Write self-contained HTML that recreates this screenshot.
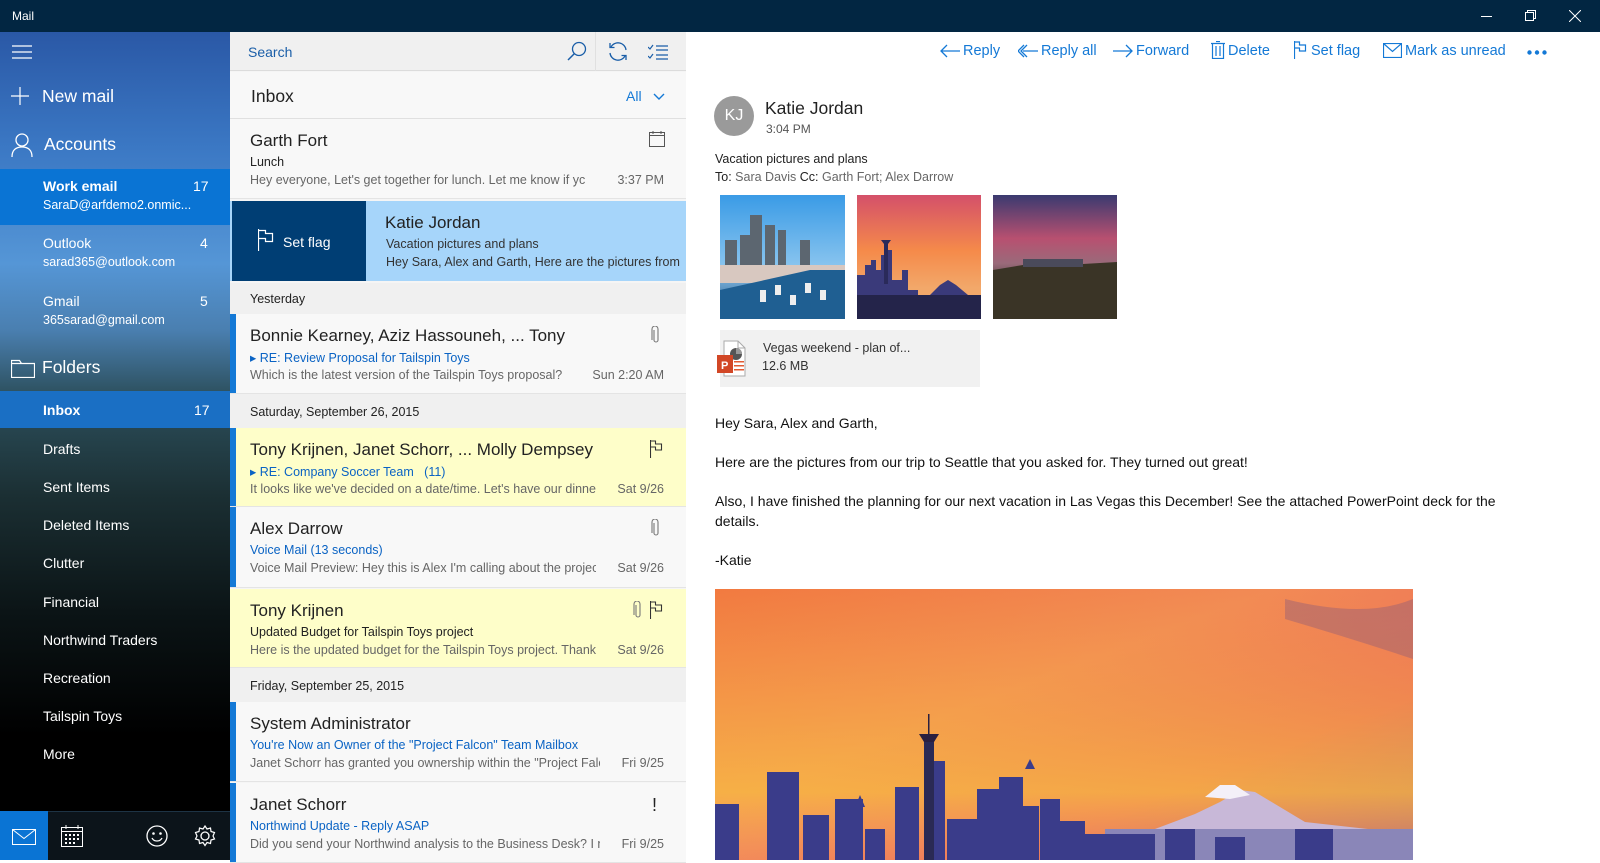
<!DOCTYPE html>
<html><head><meta charset="utf-8">
<style>
*{box-sizing:border-box;margin:0;padding:0}
body{width:1600px;height:860px;overflow:hidden;font-family:"Liberation Sans",sans-serif;background:#fff;position:relative}
.abs{position:absolute}
#title{left:0;top:0;width:1600px;height:32px;background:#022642;color:#fff;font-size:12px}
#side{left:0;top:32px;width:230px;height:828px;background:linear-gradient(180deg,#2a58a6 0%,#3b78c4 14%,#5596d6 28%,#4a7fb0 36%,#2c4f5c 44%,#1b2f33 56%,#0b1416 70%,#000 85%);color:#fff;overflow:hidden}
#side .t{position:absolute;white-space:nowrap}
#list{left:230px;top:32px;width:456px;height:828px;background:#f5f5f5}
.row{position:absolute;left:0;width:456px;background:#f8f8f8;border-bottom:1px solid #e4e4e4}
.row .bar{position:absolute;left:0;top:0;bottom:0;width:6px;background:#1479d6}
.nm{position:absolute;left:20px;top:12px;font-size:17px;color:#222;white-space:nowrap;width:400px;overflow:hidden}
.sb{position:absolute;left:20px;top:36px;font-size:12.5px;color:#222;white-space:nowrap}
.sb.b{color:#0a63c4}
.pv{position:absolute;left:20px;top:54px;font-size:12.5px;color:#666;white-space:nowrap;width:346px;overflow:hidden}
.dt{position:absolute;right:22px;top:54px;font-size:12.5px;color:#666}
.hdr{position:absolute;left:0;width:456px;background:#f0f0f0;font-size:12.5px;color:#222;padding-left:20px}
#read{left:686px;top:32px;width:914px;height:828px;background:#fff}
.tb{position:absolute;top:11px;font-size:14.5px;color:#1479d6;white-space:nowrap}
.tb svg{vertical-align:-3px;margin-right:3px}
</style></head><body>
<div id="title" class="abs"><span style="position:absolute;left:12px;top:9px">Mail</span>
<div style="position:absolute;left:1481px;top:16px;width:11px;height:1px;background:#fff"></div>
<svg style="position:absolute;left:1525px;top:10px" width="12" height="12"><rect x="0.5" y="2.5" width="8" height="8" fill="none" stroke="#fff"/><path d="M2.5 2.5V0.5h8v8h-2" fill="none" stroke="#fff"/></svg>
<svg style="position:absolute;left:1569px;top:10px" width="12" height="12"><path d="M0 0L12 12M12 0L0 12" stroke="#fff"/></svg>
</div>

<div id="side" class="abs">
<svg class="t" style="left:12px;top:13px" width="20" height="14"><path d="M0 1h20M0 7h20M0 13h20" stroke="#fff" stroke-width="1.2"/></svg>
<svg class="t" style="left:11px;top:55px" width="18" height="18"><path d="M9 0v18M0 9h18" stroke="#fff" stroke-width="1.2"/></svg>
<div class="t" style="left:42px;top:54px;font-size:17.5px">New mail</div>
<svg class="t" style="left:11px;top:101px" width="22" height="24"><circle cx="11" cy="7" r="6" fill="none" stroke="#fff" stroke-width="1.3"/><path d="M1 24c0-7 4-10 10-10s10 3 10 10" fill="none" stroke="#fff" stroke-width="1.3"/></svg>
<div class="t" style="left:44px;top:102px;font-size:17.5px">Accounts</div>
<div class="t" style="left:0;top:137px;width:230px;height:56px;background:#0a74d4"></div>
<div class="t" style="left:43px;top:146px;font-size:14px;font-weight:bold">Work email</div>
<div class="t" style="left:193px;top:146px;font-size:14px">17</div>
<div class="t" style="left:43px;top:166px;font-size:12.5px">SaraD@arfdemo2.onmic...</div>
<div class="t" style="left:43px;top:203px;font-size:14px">Outlook</div>
<div class="t" style="left:200px;top:203px;font-size:14px">4</div>
<div class="t" style="left:43px;top:223px;font-size:12.5px">sarad365@outlook.com</div>
<div class="t" style="left:43px;top:261px;font-size:14px">Gmail</div>
<div class="t" style="left:200px;top:261px;font-size:14px">5</div>
<div class="t" style="left:43px;top:281px;font-size:12.5px">365sarad@gmail.com</div>
<svg class="t" style="left:11px;top:326px" width="24" height="20"><path d="M0.5 2.5h8l2 3h13v14h-23z M0.5 5.5h10" fill="none" stroke="#fff" stroke-width="1.2"/></svg>
<div class="t" style="left:42px;top:325px;font-size:17.5px">Folders</div>
<div class="t" style="left:0;top:359px;width:230px;height:37px;background:#1a6fc4"></div>
<div class="t" style="left:43px;top:370px;font-size:14px;font-weight:bold">Inbox</div>
<div class="t" style="left:194px;top:370px;font-size:14px">17</div>
<div class="t" style="left:43px;top:409px;font-size:14px">Drafts</div>
<div class="t" style="left:43px;top:447px;font-size:14px">Sent Items</div>
<div class="t" style="left:43px;top:485px;font-size:14px">Deleted Items</div>
<div class="t" style="left:43px;top:523px;font-size:14px">Clutter</div>
<div class="t" style="left:43px;top:562px;font-size:14px">Financial</div>
<div class="t" style="left:43px;top:600px;font-size:14px">Northwind Traders</div>
<div class="t" style="left:43px;top:638px;font-size:14px">Recreation</div>
<div class="t" style="left:43px;top:676px;font-size:14px">Tailspin Toys</div>
<div class="t" style="left:43px;top:714px;font-size:14px">More</div>
<div class="t" style="left:0;top:779px;width:230px;height:49px;background:#0c141a;border-top:1px solid #1d3344"></div>
<div class="t" style="left:0;top:779px;width:48px;height:49px;background:#0a74d4"></div>
<svg class="t" style="left:12px;top:797px" width="24" height="16"><rect x="0.5" y="0.5" width="23" height="15" fill="none" stroke="#fff"/><path d="M0.5 0.5l11.5 9 11.5-9" fill="none" stroke="#fff"/></svg>
<svg class="t" style="left:61px;top:793px" width="22" height="22"><rect x="0.5" y="2.5" width="21" height="19" fill="none" stroke="#fff"/><path d="M5 0v4M17 0v4M0.5 6.5h21" stroke="#fff"/><g fill="#fff"><rect x="4" y="9" width="2" height="2"/><rect x="8" y="9" width="2" height="2"/><rect x="12" y="9" width="2" height="2"/><rect x="16" y="9" width="2" height="2"/><rect x="4" y="13" width="2" height="2"/><rect x="8" y="13" width="2" height="2"/><rect x="12" y="13" width="2" height="2"/><rect x="16" y="13" width="2" height="2"/><rect x="4" y="17" width="2" height="2"/><rect x="8" y="17" width="2" height="2"/><rect x="12" y="17" width="2" height="2"/></g></svg>
<svg class="t" style="left:146px;top:793px" width="22" height="22"><circle cx="11" cy="11" r="10" fill="none" stroke="#fff" stroke-width="1.3"/><circle cx="7.5" cy="8.5" r="1.3" fill="#fff"/><circle cx="14.5" cy="8.5" r="1.3" fill="#fff"/><path d="M6 13c2 4 8 4 10 0" fill="none" stroke="#fff" stroke-width="1.3"/></svg>
<svg class="t" style="left:194px;top:793px" width="22" height="22"><circle cx="11" cy="11" r="4" fill="none" stroke="#fff" stroke-width="1.3"/><path d="M11 1l2 3 3.5-1 .5 3.5 3.5 1-1.5 3.5 1.5 3-3.5 1-.5 3.5-3.5-1-2 3-2-3-3.5 1-.5-3.5-3.5-1 1.5-3-1.5-3.5 3.5-1 .5-3.5 3.5 1z" fill="none" stroke="#fff" stroke-width="1.2"/></svg>
</div>

<div id="list" class="abs">
<div style="position:absolute;left:0;top:0;width:456px;height:39px;background:#f0f0f0;border-bottom:1px solid #dcdcdc"></div>
<div style="position:absolute;left:18px;top:12px;font-size:14px;color:#1a5ea8">Search</div>
<svg style="position:absolute;left:337px;top:9px" width="20" height="20"><circle cx="12" cy="8" r="6.5" fill="none" stroke="#1a5ea8" stroke-width="1.3"/><path d="M7.5 12.5L1 19" stroke="#1a5ea8" stroke-width="1.5"/></svg>
<div style="position:absolute;left:365px;top:0;width:1px;height:39px;background:#e0e0e0"></div>
<svg style="position:absolute;left:377px;top:9px" width="22" height="21"><path d="M19 9a8 8 0 0 0-15-3M3 12a8 8 0 0 0 15 3" fill="none" stroke="#1a5ea8" stroke-width="1.3"/><path d="M3 2v4.5h4.5M19 19v-4.5h-4.5" fill="none" stroke="#1a5ea8" stroke-width="1.3"/></svg>
<svg style="position:absolute;left:418px;top:12px" width="20" height="16"><path d="M0 3l2 2 3-4M0 12l2 2 3-4M8 2h12M8 6h12M8 11h12M8 15h12" fill="none" stroke="#1a5ea8" stroke-width="1.2"/></svg>
<div style="position:absolute;left:0;top:40px;width:456px;height:47px;background:#f8f8f8;border-bottom:1px solid #e0e0e0"></div>
<div style="position:absolute;left:21px;top:54px;font-size:17.5px;color:#222">Inbox</div>
<div style="position:absolute;left:396px;top:56px;font-size:14px;color:#1479d6">All</div>
<svg style="position:absolute;left:423px;top:61px" width="12" height="8"><path d="M1 1l5 5 5-5" fill="none" stroke="#1479d6" stroke-width="1.4"/></svg>

<div class="row" style="top:87px;height:80px">
<div class="nm" style="top:12px">Garth Fort</div>
<svg style="position:absolute;left:419px;top:12px" width="16" height="16"><rect x="0.5" y="1.5" width="15" height="14" fill="none" stroke="#555"/><path d="M0.5 4.5h15M4 0v3M12 0v3" stroke="#555"/></svg>
<div class="sb">Lunch</div>
<div class="pv">Hey everyone, Let's get together for lunch. Let me know if yc</div>
<div class="dt">3:37 PM</div></div>

<div class="row" style="top:169px;height:80px;background:#a6d5fa;border:none">
<div style="position:absolute;left:2px;top:0;width:134px;height:80px;background:#003e74"></div>
<svg style="position:absolute;left:28px;top:28px" width="16" height="22"><path d="M0.5 0v22M0.5 1.5h7v3h7v8h-7v-3h-7" fill="none" stroke="#fff" stroke-width="1.2"/></svg>
<div style="position:absolute;left:53px;top:33px;font-size:14px;color:#fff">Set flag</div>
<div style="position:absolute;left:155px;top:12px;font-size:17px;color:#222">Katie Jordan</div>
<div style="position:absolute;left:156px;top:36px;font-size:12.5px;color:#333">Vacation pictures and plans</div>
<div style="position:absolute;left:156px;top:54px;font-size:12.5px;color:#333;white-space:nowrap;width:300px;overflow:hidden">Hey Sara, Alex and Garth, Here are the pictures from</div></div>

<div class="hdr" style="top:251px;height:31px;line-height:33px">Yesterday</div>
<div class="row" style="top:282px;height:80px"><div class="bar"></div>
<div class="nm" style="width:320px">Bonnie Kearney, Aziz Hassouneh, ... Tony Krijnen</div>
<svg style="position:absolute;left:421px;top:12px" width="10" height="18"><path d="M3 4v10a2 2 0 0 0 4 0V3a3 3 0 0 0-6 0v11" fill="none" stroke="#777" stroke-width="1.1"/></svg>
<div class="sb b">&#9656; RE: Review Proposal for Tailspin Toys</div>
<div class="pv">Which is the latest version of the Tailspin Toys proposal?</div>
<div class="dt">Sun 2:20 AM</div></div>

<div class="hdr" style="top:362px;height:34px;line-height:36px">Saturday, September 26, 2015</div>
<div class="row" style="top:396px;height:79px;background:#fefec9"><div class="bar"></div>
<div class="nm">Tony Krijnen, Janet Schorr, ... Molly Dempsey</div>
<svg style="position:absolute;left:420px;top:12px" width="14" height="18"><path d="M0.5 0v18M0.5 1h5v3h6v6h-6v-3h-5" fill="none" stroke="#333" stroke-width="1.1"/></svg>
<div class="sb b">&#9656; RE: Company Soccer Team &nbsp;&nbsp;(11)</div>
<div class="pv">It looks like we've decided on a date/time. Let's have our dinner</div>
<div class="dt">Sat 9/26</div></div>

<div class="row" style="top:475px;height:81px"><div class="bar"></div>
<div class="nm">Alex Darrow</div>
<svg style="position:absolute;left:421px;top:12px" width="10" height="18"><path d="M3 4v10a2 2 0 0 0 4 0V3a3 3 0 0 0-6 0v11" fill="none" stroke="#777" stroke-width="1.1"/></svg>
<div class="sb b">Voice Mail (13 seconds)</div>
<div class="pv">Voice Mail Preview: Hey this is Alex I'm calling about the project</div>
<div class="dt">Sat 9/26</div></div>

<div class="row" style="top:557px;height:79px;background:#fefec9">
<div class="nm">Tony Krijnen</div>
<svg style="position:absolute;left:403px;top:12px" width="10" height="18"><path d="M3 4v10a2 2 0 0 0 4 0V3a3 3 0 0 0-6 0v11" fill="none" stroke="#777" stroke-width="1.1"/></svg>
<svg style="position:absolute;left:420px;top:12px" width="14" height="18"><path d="M0.5 0v18M0.5 1h5v3h6v6h-6v-3h-5" fill="none" stroke="#333" stroke-width="1.1"/></svg>
<div class="sb">Updated Budget for Tailspin Toys project</div>
<div class="pv">Here is the updated budget for the Tailspin Toys project. Thanks</div>
<div class="dt">Sat 9/26</div></div>

<div class="hdr" style="top:636px;height:34px;line-height:36px">Friday, September 25, 2015</div>
<div class="row" style="top:670px;height:80px"><div class="bar"></div>
<div class="nm">System Administrator</div>
<div class="sb b">You're Now an Owner of the "Project Falcon" Team Mailbox</div>
<div class="pv" style="width:350px">Janet Schorr has granted you ownership within the "Project Falcon"</div>
<div class="dt">Fri 9/25</div></div>

<div class="row" style="top:751px;height:80px"><div class="bar"></div>
<div class="nm">Janet Schorr</div>
<div style="position:absolute;left:422px;top:12px;font-size:18px;color:#222">!</div>
<div class="sb b">Northwind Update - Reply ASAP</div>
<div class="pv" style="width:350px">Did you send your Northwind analysis to the Business Desk? I need</div>
<div class="dt">Fri 9/25</div></div>
</div>

<div id="read" class="abs">
<div class="tb" style="left:254px"><svg width="20" height="14"><path d="M20 7H1M7 1L1 7l6 6" fill="none" stroke="#1479d6" stroke-width="1.3"/></svg>Reply</div>
<div class="tb" style="left:332px"><svg width="20" height="14"><path d="M20 7H5M9 1L3 7l6 6M6 1L0 7l6 6" fill="none" stroke="#1479d6" stroke-width="1.3"/></svg>Reply all</div>
<div class="tb" style="left:427px"><svg width="20" height="14"><path d="M0 7h19M13 1l6 6-6 6" fill="none" stroke="#1479d6" stroke-width="1.3"/></svg>Forward</div>
<div class="tb" style="left:525px;top:9px"><svg width="14" height="18" style="vertical-align:-4px"><path d="M0 2.5h14M5 0.5h4M1.5 2.5v15h11v-15M5 5v10M9 5v10" fill="none" stroke="#1479d6" stroke-width="1.2"/></svg>Delete</div>
<div class="tb" style="left:608px;top:9px"><svg width="14" height="18" style="vertical-align:-4px"><path d="M0.5 0v18M0.5 1h5v3h6v6h-6v-3h-5" fill="none" stroke="#1479d6" stroke-width="1.2"/></svg>Set flag</div>
<div class="tb" style="left:697px"><svg width="19" height="15"><rect x="0.5" y="0.5" width="18" height="14" fill="none" stroke="#1479d6" stroke-width="1.2"/><path d="M0.5 0.5l9 8 9-8" fill="none" stroke="#1479d6" stroke-width="1.2"/></svg>Mark as unread</div>
<svg style="position:absolute;left:841px;top:18px" width="20" height="5"><circle cx="2.5" cy="2.5" r="2.2" fill="#1479d6"/><circle cx="10" cy="2.5" r="2.2" fill="#1479d6"/><circle cx="17.5" cy="2.5" r="2.2" fill="#1479d6"/></svg>

<div style="position:absolute;left:28px;top:64px;width:40px;height:40px;border-radius:50%;background:#9a9a9a;color:#fff;font-size:16px;text-align:center;line-height:40px">KJ</div>
<div style="position:absolute;left:79px;top:66px;font-size:17.5px;color:#222">Katie Jordan</div>
<div style="position:absolute;left:80px;top:90px;font-size:12px;color:#555">3:04 PM</div>
<div style="position:absolute;left:29px;top:120px;font-size:12.5px;color:#222">Vacation pictures and plans</div>
<div style="position:absolute;left:29px;top:138px;font-size:12.5px;color:#666"><span style="color:#222">To:</span> Sara Davis <span style="color:#222">Cc:</span> Garth Fort; Alex Darrow</div>

<svg style="position:absolute;left:34px;top:163px" width="125" height="124"><defs><linearGradient id="a" x1="0" y1="0" x2="0" y2="1"><stop offset="0" stop-color="#3a9be6"/><stop offset=".6" stop-color="#8cc6ef"/><stop offset="1" stop-color="#1a4a7a"/></linearGradient></defs><rect width="125" height="124" fill="url(#a)"/><g fill="#5c6670"><rect x="30" y="20" width="12" height="50"/><rect x="45" y="30" width="10" height="40"/><rect x="58" y="35" width="8" height="35"/><rect x="20" y="40" width="10" height="30"/><rect x="80" y="45" width="10" height="25"/><rect x="5" y="45" width="12" height="30"/></g><rect y="70" width="125" height="18" fill="#d8c8c0"/><path d="M0 95L90 75H125V124H0z" fill="#1f5f92"/><g fill="#eee"><rect x="40" y="95" width="6" height="12"/><rect x="55" y="90" width="6" height="10"/><rect x="70" y="100" width="6" height="10"/><rect x="85" y="88" width="6" height="10"/><rect x="100" y="95" width="6" height="10"/></g></svg>
<svg style="position:absolute;left:171px;top:163px" width="124" height="124"><defs><linearGradient id="b" x1="0" y1="0" x2="0" y2="1"><stop offset="0" stop-color="#d4506a"/><stop offset=".45" stop-color="#f58a4a"/><stop offset=".75" stop-color="#f2a86a"/></linearGradient></defs><rect width="124" height="124" fill="url(#b)"/><path d="M0 124V80h8V70h6v-5h5v10h5v-15h5v-5h6v30h10v-10h6v20h10v5h12l10-10 8-5 8 5 12 10v69z" fill="#3a3a7a"/><path d="M24 45h10l-3 4v40h-4V49z" fill="#2a2a5a"/><rect y="100" width="124" height="24" fill="#24244a"/></svg>
<svg style="position:absolute;left:307px;top:163px" width="124" height="124"><defs><linearGradient id="c" x1="0" y1="0" x2="0" y2="1"><stop offset="0" stop-color="#3a3a70"/><stop offset=".35" stop-color="#b85070"/><stop offset=".55" stop-color="#9a6a7a"/><stop offset=".7" stop-color="#5a4a4a"/><stop offset="1" stop-color="#2a2a22"/></linearGradient></defs><rect width="124" height="124" fill="url(#c)"/><path d="M0 124V75l30-5 30-3 30 2 34-2v57z" fill="#3a3426"/><path d="M30 72h60v-8h-60z" fill="#4a4a5a"/></svg>

<div style="position:absolute;left:34px;top:298px;width:260px;height:57px;background:#f1f1f1"></div>
<svg style="position:absolute;left:30px;top:308px" width="34" height="38"><path d="M8 1h14l7 7v28H8z" fill="#fff" stroke="#aaa"/><path d="M22 1v7h7" fill="none" stroke="#aaa"/><circle cx="20" cy="14" r="6" fill="#555"/><path d="M20 14V8a6 6 0 0 1 6 6z" fill="#999"/><rect x="18" y="21" width="10" height="1.5" fill="#e25b33"/><rect x="18" y="25" width="10" height="1.5" fill="#e25b33"/><rect x="18" y="29" width="10" height="1.5" fill="#e25b33"/><rect x="1" y="15" width="16" height="18" fill="#d24726"/><text x="5" y="29" font-family="Liberation Sans" font-weight="bold" font-size="11" fill="#fff">P</text></svg>
<div style="position:absolute;left:77px;top:309px;font-size:12.5px;color:#333">Vegas weekend - plan of...</div>
<div style="position:absolute;left:76px;top:327px;font-size:12.5px;color:#333">12.6 MB</div>

<div style="position:absolute;left:29px;top:382px;font-size:14px;color:#111;line-height:19.5px;width:800px">
Hey Sara, Alex and Garth,<br><br>Here are the pictures from our trip to Seattle that you asked for. They turned out great!<br><br>Also, I have finished the planning for our next vacation in Las Vegas this December! See the attached PowerPoint deck for the details.<br><br>-Katie</div>

<svg style="position:absolute;left:29px;top:557px" width="698" height="271" viewBox="0 0 698 271"><defs><linearGradient id="s" x1="0" y1="0" x2="1" y2="1"><stop offset="0" stop-color="#f27a40"/><stop offset=".4" stop-color="#f28a55"/><stop offset=".7" stop-color="#ec6a5a"/><stop offset="1" stop-color="#a05a78"/></linearGradient><linearGradient id="s2" x1="0" y1="0" x2="0" y2="1"><stop offset="0" stop-color="#f5b040" stop-opacity="0"/><stop offset=".75" stop-color="#f8c040" stop-opacity=".7"/><stop offset="1" stop-color="#f8a860" stop-opacity=".3"/></linearGradient></defs><rect width="698" height="271" fill="url(#s)"/><rect width="698" height="271" fill="url(#s2)"/><path d="M570 10q80 20 128 0v60q-60-20-128-40z" fill="#8a5a7a" opacity=".4"/><path d="M440 240l40-15 25-12 20-12 15 2 20 12 30 18 108 12v28H440z" fill="#c8b8d8"/><path d="M490 208l15-12 15 0 15 10-20 4z" fill="#f4f0f8"/><rect x="390" y="240" width="308" height="31" fill="#8a86b8"/><g fill="#3a3c8a"><rect x="0" y="215" width="24" height="56"/><rect x="52" y="183" width="32" height="88"/><rect x="88" y="226" width="26" height="45"/><rect x="120" y="210" width="28" height="61"/><rect x="150" y="240" width="20" height="31"/><rect x="180" y="198" width="24" height="73"/><rect x="210" y="172" width="20" height="99"/><rect x="232" y="230" width="30" height="41"/><rect x="262" y="200" width="22" height="71"/><rect x="284" y="188" width="24" height="83"/><rect x="308" y="217" width="16" height="54"/><rect x="325" y="210" width="20" height="61"/><rect x="345" y="232" width="25" height="39"/><rect x="370" y="245" width="70" height="26"/><rect x="450" y="240" width="30" height="31"/><rect x="500" y="248" width="30" height="23"/><rect x="580" y="240" width="38" height="31"/></g><path d="M140 218l5-12 5 12z" fill="#3a3c8a"/><path d="M310 180l5-10 5 10z" fill="#3a3c8a"/><path d="M204 145l20 0-5 8h-10z" fill="#2a2040"/><rect x="209" y="153" width="10" height="118" fill="#2a2a55"/><rect x="213" y="125" width="1.5" height="22" fill="#2a2040"/></svg>
</div>
</body></html>
